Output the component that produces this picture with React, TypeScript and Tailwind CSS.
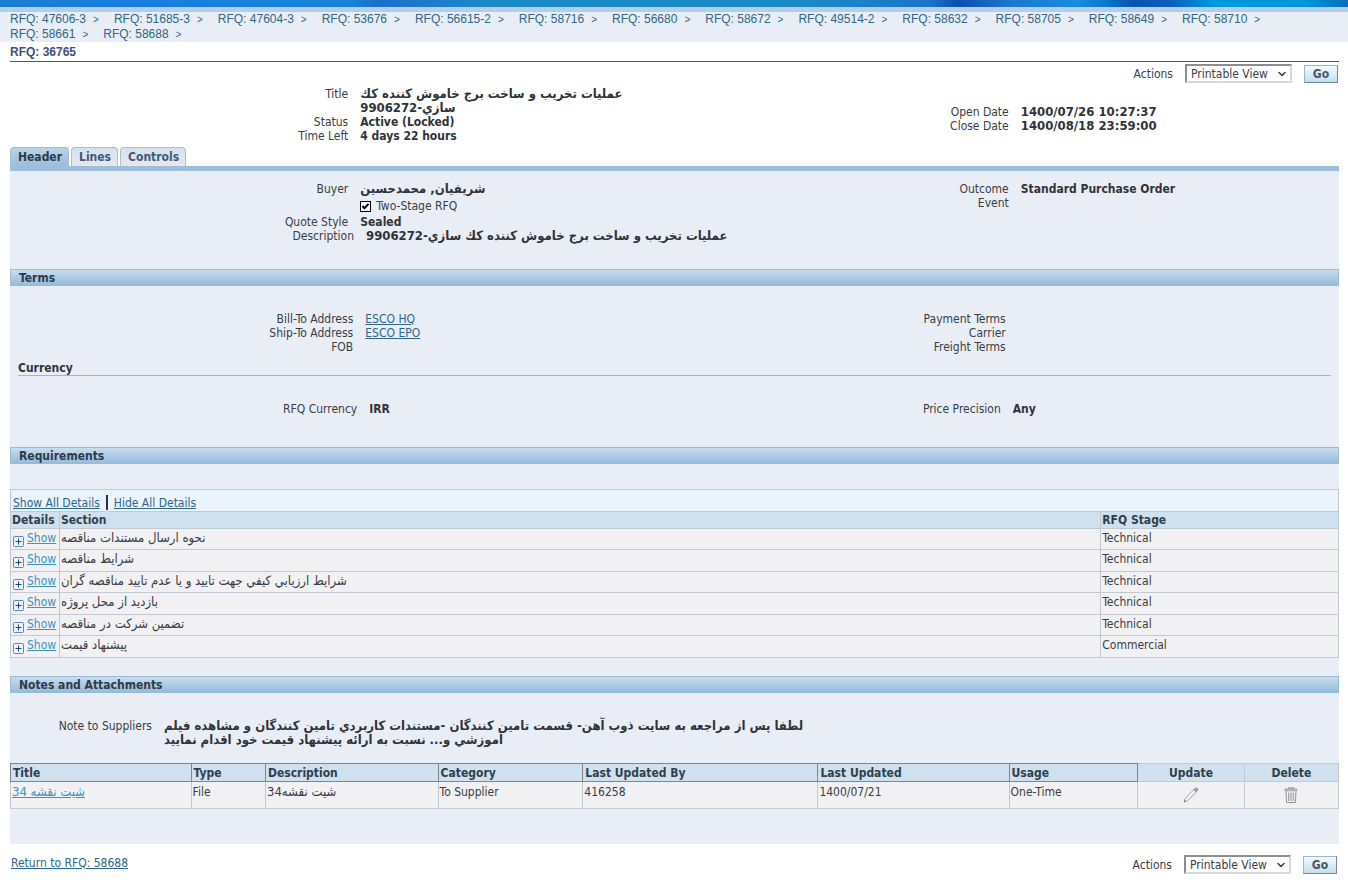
import React from "react";
import { ChevronDown } from "lucide-react";
import clsx from "clsx";

const breadcrumbs = [
  "47606-3", "51685-3", "47604-3", "53676", "56615-2", "58716", "56680", "58672",
  "49514-2", "58632", "58705", "58649", "58710", "58661", "58688",
];

const tabs = ["Header", "Lines", "Controls"];

const sections = [
  { name: "نحوه ارسال مستندات مناقصه", stage: "Technical" },
  { name: "شرايط مناقصه", stage: "Technical" },
  { name: "شرايط ارزيابي كيفي جهت تاييد و يا عدم تاييد مناقصه گران", stage: "Technical" },
  { name: "بازديد از محل پروژه", stage: "Technical" },
  { name: "تضمين شركت در مناقصه", stage: "Technical" },
  { name: "پيشنهاد قيمت", stage: "Commercial" },
];

const attachmentColumns = [
  { label: "Title", width: "w-[13.6%]" },
  { label: "Type", width: "w-[5.6%]" },
  { label: "Description", width: "w-[13%]" },
  { label: "Category", width: "w-[10.9%]" },
  { label: "Last Updated By", width: "w-[17.7%]" },
  { label: "Last Updated", width: "w-[14.4%]" },
  { label: "Usage", width: "w-[9.7%]" },
];

const attachments = [
  {
    title: "شيت نقشه 34",
    type: "File",
    description: "شيت نقشه34",
    category: "To Supplier",
    updatedBy: "416258",
    updated: "1400/07/21",
    usage: "One-Time",
  },
];

function Fields({ cols, className, children }: { cols: string; className?: string; children: React.ReactNode }) {
  return <dl className={clsx("grid flex-1 content-start gap-x-3", cols, className)}>{children}</dl>;
}

function Field({ label, large, children }: { label: string; large?: boolean; children?: React.ReactNode }) {
  return (
    <>
      <dt className="text-right">{label}</dt>
      <dd className={clsx("font-bold text-[#303338]", large && "text-[13px] leading-[14px]")}>{children}</dd>
    </>
  );
}

function SectionBar({ title }: { title: string }) {
  return (
    <h2 className="h-[17px] border border-b-0 border-[#9dbad3] bg-linear-to-b from-[#c9dcee] to-[#93b9da] px-2 text-[12px] leading-[17px] font-bold text-[#2c3b4a]">
      {title}
    </h2>
  );
}

function ActionsBar({ id }: { id: string }) {
  return (
    <form className="flex items-center" onSubmit={(e) => e.preventDefault()}>
      <label htmlFor={id} className="mr-3">
        Actions
      </label>
      <div className="relative mr-3">
        <select
          id={id}
          className="block h-[19px] w-[107px] appearance-none border-2 border-t-[#8d8d92] border-r-[#d8d8dc] border-b-[#d8d8dc] border-l-[#8d8d92] bg-white pl-1 text-[12px] leading-[14px]"
        >
          <option>Printable View</option>
        </select>
        <ChevronDown size={12} strokeWidth={3} className="pointer-events-none absolute top-1 right-1" />
      </div>
      <button className="h-[18px] w-[34px] border border-[#9db5c4] border-r-[#6f8797] border-b-[#6f8797] bg-linear-to-b from-[#f4fafd] to-[#c4dfeb] text-[12px] leading-[14px] font-bold text-[#44586b]">
        Go
      </button>
    </form>
  );
}

function ExpandIcon() {
  return (
    <svg width="11" height="11" viewBox="0 0 11 11" className="mt-[7px] shrink-0" aria-hidden="true">
      <rect x="0.5" y="0.5" width="10" height="10" rx="1" fill="#e8f3fc" stroke="#5b86b5" />
      <path d="M2.500 5.500h6M5.500 2.500v6" stroke="#1f4568" />
    </svg>
  );
}

function PencilIcon() {
  return (
    <svg width="16" height="16" viewBox="0 0 16 16" fill="none" aria-hidden="true">
      <path d="M1 15l1.300-3.500L10.800 2.600l2.400 2.400L4.500 13.700z" fill="#fbfbfb" stroke="#8e8e90" strokeWidth="0.9" />
      <path d="M10.800 2.600L12.400 1Q13.300.5 14 1.200l.6.6q.6.8 0 1.500L13.200 5z" fill="#a4a4a6" stroke="#8e8e90" strokeWidth="0.8" />
      <path d="M1 15l.6-2 1.400 1.400z" fill="#6e6e70" />
    </svg>
  );
}

function TrashIcon() {
  return (
    <svg width="14" height="16" viewBox="0 0 14 16" fill="none" stroke="#919193" aria-hidden="true">
      <path d="M4.500 2V.8h5V2" />
      <rect x="1" y="2" width="12" height="2" rx="0.8" fill="#d5d5d7" />
      <path d="M2 4.500l.6 11h8.800l.6-11" fill="#f4f4f4" />
      <path d="M4.500 5.500v8.500M6.200 5.500v8.500M7.900 5.500v8.500M9.600 5.500v8.500" strokeWidth="0.8" />
    </svg>
  );
}

export default function App() {
  return (
    <div className="bg-white font-['DejaVu_Sans_Condensed','DejaVu_Sans',sans-serif] text-[12px] leading-[14px] text-[#3a3d42]">
      <div className="h-[7px] bg-[linear-gradient(to_right,#1a7fcf_0%,#177ee0_10%,#1683d8_26%,#1a6fcd_28%,#1a8ac6_36%,#1a8ac6_60%,#1b74cb_69%,#0b4fb0_71%,#1a78cf_75%,#1a8ae0_80%,#0878d0_82%,#0753ae_84%,#0a62bd_87%,#009ade_90%,#0096dc_97%,#0b6abb_100%)]" />
      <div className="h-[5px] bg-[#b3cdea]" />
      <nav className="bg-[#e9edf5] px-[10px] font-['Liberation_Sans',sans-serif] leading-[15px] text-[#2d6787]">
        <ol className="flex flex-wrap">
          {breadcrumbs.map((num) => (
            <li key={num} className="mr-[15px] flex gap-[7px]">
              <a href="#">RFQ: {num}</a>
              <span className="text-[10px] leading-[15px]">&gt;</span>
            </li>
          ))}
        </ol>
      </nav>

      <div className="mr-[9px] ml-[10px]">
        <h1 className="mb-[2px] border-b border-[#44597a] pt-[3px] pb-[2px] font-['Liberation_Sans',sans-serif] font-bold text-[#3f4f7d]">
          RFQ: 36765
        </h1>
        <div className="flex justify-end pr-px">
          <ActionsBar id="actions-top" />
        </div>

        <div className="mt-1 flex">
          <Fields cols="grid-cols-[338fr_314fr]">
            <Field label="Title" large>
              <p className="max-w-[272px]">عمليات تخريب و ساخت برج خاموش كننده كك سازي-9906272</p>
            </Field>
            <Field label="Status">Active (Locked)</Field>
            <Field label="Time Left">4 days 22 hours</Field>
          </Fields>
          <Fields cols="grid-cols-[334fr_318fr]" className="pt-[18px]">
            <Field label="Open Date" large>1400/07/26 10:27:37</Field>
            <Field label="Close Date" large>1400/08/18 23:59:00</Field>
          </Fields>
        </div>

        <div role="tablist" className="mt-1 flex gap-[2px] border-b-[5px] border-[#9dbddb]">
          {tabs.map((tab, i) => (
            <button
              key={tab}
              role="tab"
              aria-selected={i === 0}
              className={clsx(
                "h-[19px] rounded-t border border-b-0 pr-[6px] pl-[7px] font-bold",
                i === 0
                  ? "border-[#9dbddb] bg-linear-to-b from-[#b9d2e8] to-[#9dbddb] text-[#2c3b4a]"
                  : "border-[#b4bcc6] bg-linear-to-b from-[#d3e1ee] to-[#e6e9ee] text-[#40597a]"
              )}
            >
              {tab}
            </button>
          ))}
        </div>

        <main className="bg-[#e9eef6] pb-[35px]">
          <div className="flex pt-[11px]">
            <Fields cols="grid-cols-[338fr_314fr]">
              <Field label="Buyer" large>شريفيان, محمدحسين</Field>
              <dd className="col-start-2 flex items-center pt-[3px] pb-[2px]">
                <input
                  id="two-stage"
                  type="checkbox"
                  defaultChecked
                  className="h-[11px] w-[11px] appearance-none border border-black bg-white"
                />
                <svg viewBox="0 0 11 11" className="pointer-events-none -ml-[11px] h-[11px] w-[11px]" fill="none" stroke="#000" strokeWidth="2" aria-hidden="true">
                  <path d="M2.500 5l2 2.300 4-4.500" />
                </svg>
                <label htmlFor="two-stage" className="ml-[5px]">
                  Two-Stage RFQ
                </label>
              </dd>
              <Field label="Quote Style">Sealed</Field>
            </Fields>
            <Fields cols="grid-cols-[334fr_318fr]">
              <Field label="Outcome">Standard Purchase Order</Field>
              <Field label="Event" />
            </Fields>
          </div>
          <Fields cols="grid-cols-[344fr_973fr]" className="mb-[26px]">
            <Field label="Description" large>عمليات تخريب و ساخت برج خاموش كننده كك سازي-9906272</Field>
          </Fields>

          <SectionBar title="Terms" />
          <div className="flex pt-[26px]">
            <Fields cols="grid-cols-[343fr_309fr]">
              <dt className="text-right">Bill-To Address</dt>
              <dd><a href="#" className="text-[#2d6787] underline">ESCO HQ</a></dd>
              <dt className="text-right">Ship-To Address</dt>
              <dd><a href="#" className="text-[#2d6787] underline">ESCO EPO</a></dd>
              <Field label="FOB" />
            </Fields>
            <Fields cols="grid-cols-[331fr_321fr]">
              <Field label="Payment Terms" />
              <Field label="Carrier" />
              <Field label="Freight Terms" />
            </Fields>
          </div>
          <h3 className="mx-2 mt-2 border-b border-[#9fb6cf] leading-[13px] font-bold text-[#303338]">Currency</h3>
          <div className="mb-[31px] flex pt-[26px]">
            <Fields cols="grid-cols-[347fr_305fr]">
              <Field label="RFQ Currency">IRR</Field>
            </Fields>
            <Fields cols="grid-cols-[326fr_326fr]">
              <Field label="Price Precision">Any</Field>
            </Fields>
          </div>

          <SectionBar title="Requirements" />
          <div className="mt-[25px] flex h-[22px] items-end border border-b-0 border-[#c3c9d0] bg-[#ebf4fd] px-[2px] pb-px text-[#2d6787]">
            <a href="#" className="underline">Show All Details</a>
            <span className="mx-[6px] h-[15px] w-[2px] bg-[#303338]" />
            <a href="#" className="underline">Hide All Details</a>
          </div>
          <table className="w-full table-fixed border-collapse bg-[#f1f1f4]">
            <thead className="bg-[#cfe0ef]">
              <tr className="h-[17px] text-left text-[#303f4a]">
                <th className="w-[49px] border border-[#c3c9d0] p-0 pl-px">Details</th>
                <th className="border border-[#c3c9d0] p-0 pl-px">Section</th>
                <th className="w-[17.9%] border border-[#c3c9d0] p-0 pl-px">RFQ Stage</th>
              </tr>
            </thead>
            <tbody>
              {sections.map((s) => (
                <tr key={s.name} className="h-[21px] align-top even:h-[22px]">
                  <td className="border border-[#c3c9d0] p-0 pl-[2px]">
                    <div className="flex h-5 gap-[3px]">
                      <ExpandIcon />
                      <a href="#" className="pt-[2px] text-[#3a95bd] underline">Show</a>
                    </div>
                  </td>
                  <td className="border border-[#c3c9d0] p-0 pt-[2px] pl-px text-[13px] leading-[14px]">{s.name}</td>
                  <td className="border border-[#c3c9d0] p-0 pt-[2px] pl-px">{s.stage}</td>
                </tr>
              ))}
            </tbody>
          </table>

          <div className="mt-[18px]">
            <SectionBar title="Notes and Attachments" />
          </div>
          <Fields cols="grid-cols-[142fr_1175fr]" className="mt-[26px] mb-4">
            <Field label="Note to Suppliers" large>
              <p className="max-w-[656px]">
                لطفا پس از مراجعه به سايت ذوب آهن- قسمت تامين كنندگان -مستندات كاربردي تامين كنندگان و مشاهده فيلم آموزشي و... نسبت به ارائه پيشنهاد قيمت خود اقدام نماييد
              </p>
            </Field>
          </Fields>

          <table className="w-full table-fixed border-collapse bg-[#f1f1f4]">
            <thead className="bg-[#cfe0ef] text-[#303f4a]">
              <tr className="h-[18px] text-left">
                {attachmentColumns.map((col) => (
                  <th key={col.label} className={clsx("border border-[#7f8592] p-0 pl-[2px]", col.width)}>
                    {col.label}
                  </th>
                ))}
                <th className="w-[8%] border border-[#c3c9d0] p-0 text-center">Update</th>
                <th className="border border-[#c3c9d0] p-0 text-center">Delete</th>
              </tr>
            </thead>
            <tbody>
              {attachments.map((a) => (
                <tr key={a.title} className="h-[27px] align-top">
                  <td className="border border-[#c3c9d0] p-0 pt-[3px] pl-px text-[13px] leading-[14px]">
                    <a href="#" className="text-[#3a95bd] underline">{a.title}</a>
                  </td>
                  <td className="border border-[#c3c9d0] p-0 pt-[3px] pl-px">{a.type}</td>
                  <td className="border border-[#c3c9d0] p-0 pt-[3px] pl-px text-[13px] leading-[14px]">{a.description}</td>
                  <td className="border border-[#c3c9d0] p-0 pt-[3px] pl-px">{a.category}</td>
                  <td className="border border-[#c3c9d0] p-0 pt-[3px] pl-px">{a.updatedBy}</td>
                  <td className="border border-[#c3c9d0] p-0 pt-[3px] pl-px">{a.updated}</td>
                  <td className="border border-[#c3c9d0] p-0 pt-[3px] pl-px">{a.usage}</td>
                  <td className="border border-[#c3c9d0] p-0 pt-[5px]">
                    <button aria-label="Update" className="mx-auto block"><PencilIcon /></button>
                  </td>
                  <td className="border border-[#c3c9d0] p-0 pt-[5px]">
                    <button aria-label="Delete" className="mx-auto block"><TrashIcon /></button>
                  </td>
                </tr>
              ))}
            </tbody>
          </table>
        </main>

        <footer className="flex items-center justify-between pt-[11px] pr-[2px] pl-px">
          <a href="#" className="pb-1 text-[#2d6787] underline">Return to RFQ: 58688</a>
          <ActionsBar id="actions-bottom" />
        </footer>
      </div>
    </div>
  );
}
